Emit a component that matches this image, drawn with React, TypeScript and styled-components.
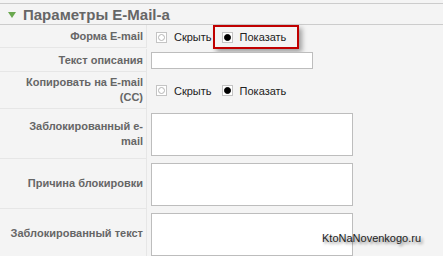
import React from "react";
import styled, { createGlobalStyle } from "styled-components";

const GlobalStyle = createGlobalStyle`
  html, body {
    margin: 0;
    padding: 0;
    background: #f4f4f4;
  }
  body {
    font-family: "Liberation Sans", Arial, sans-serif;
    width: 443px;
    height: 256px;
    overflow: hidden;
  }
`;

const Panel = styled.div`
  position: relative;
  padding-top: 3px;
  height: 253px;
  overflow: hidden;
  background: #f4f4f4;
`;

const Header = styled.div`
  display: flex;
  align-items: center;
  gap: 7px;
  height: 20px;
  padding-left: 8px;
  border-top: 1px solid #cccccc;
  border-bottom: 1px solid #cccccc;
  font-size: 15px;
  font-weight: bold;
  color: #666666;
`;

const Arrow = styled.span`
  width: 0;
  height: 0;
  border-left: 4px solid transparent;
  border-right: 4px solid transparent;
  border-top: 6px solid #6aa84f;
  margin-top: 2px;
`;

const Grid = styled.div`
  display: grid;
  grid-template-columns: 147px 1fr;
`;

const Label = styled.div<{ $h: number }>`
  display: flex;
  align-items: center;
  justify-content: flex-end;
  text-align: right;
  height: ${(p) => p.$h - 1}px;
  padding: 0 3px 0 6px;
  border-bottom: 1px solid #e6e6e6;
  border-right: 1px solid #e6e6e6;
  font-size: 11px;
  font-weight: bold;
  line-height: 15px;
  color: #666666;
  box-sizing: content-box;
  width: 137px;
`;

const Value = styled.div<{ $top?: boolean }>`
  display: flex;
  align-items: ${(p) => (p.$top ? "flex-start" : "center")};
  padding-left: 4px;
  padding-top: ${(p) => (p.$top ? "4px" : "0")};
`;

const RadioGroup = styled.div`
  display: flex;
  align-items: center;
  padding-left: 5px;
  font-size: 11px;
  color: #222222;
`;

const Option = styled.label<{ $highlight?: boolean }>`
  display: flex;
  align-items: center;
  gap: 7px;
  height: 20px;
  padding: 0 11px 0 7px;
  border: 2px solid ${(p) => (p.$highlight ? "#c00000" : "transparent")};
  box-shadow: ${(p) =>
    p.$highlight ? "3px 3px 5px rgba(0, 0, 0, 0.35)" : "none"};
  &:first-child {
    padding-left: 0;
    padding-right: 0;
    border-left: none;
    border-right: none;
    margin-right: 1px;
  }
`;

const RadioBox = styled.span`
  display: inline-flex;
  align-items: center;
  justify-content: center;
  width: 9px;
  height: 9px;
  border: 1px solid #c4c4c4;
  background: #ffffff;
`;

const Dot = styled.span<{ $on?: boolean }>`
  width: 5px;
  height: 5px;
  border-radius: 50%;
  border: 1px solid ${(p) => (p.$on ? "#000" : "#b5b5b5")};
  background: ${(p) => (p.$on ? "#000" : "#fff")};
`;

const TextInput = styled.div`
  width: 160px;
  height: 15px;
  border: 1px solid #bdbdbd;
  background: #ffffff;
`;

const TextArea = styled.div`
  width: 200px;
  height: 41px;
  border: 1px solid #bdbdbd;
  background: #ffffff;
`;

const Watermark = styled.div`
  position: absolute;
  left: 322px;
  top: 232px;
  font-size: 11px;
  color: #222222;
  text-shadow: 2px 2px 3px rgba(0, 0, 0, 0.45);
`;

const Radio = ({ on, text, highlight }: { on?: boolean; text: string; highlight?: boolean }) => (
  <Option $highlight={highlight}>
    <RadioBox>
      <Dot $on={on} />
    </RadioBox>
    {text}
  </Option>
);

const App = () => {
  return (
    <>
      <GlobalStyle />
      <Panel>
        <Header>
          <Arrow />
          Параметры E-Mail-a
        </Header>
        <Grid>
          <Label $h={23}>Форма E-mail</Label>
          <Value>
            <RadioGroup>
              <Radio text="Скрыть" />
              <Radio text="Показать" on highlight />
            </RadioGroup>
          </Value>

          <Label $h={23}>Текст описания</Label>
          <Value>
            <TextInput />
          </Value>

          <Label $h={37}>Копировать на E-mail (CC)</Label>
          <Value>
            <RadioGroup>
              <Radio text="Скрыть" />
              <Radio text="Показать" on />
            </RadioGroup>
          </Value>

          <Label $h={50}>
            Заблокированный e-
            <br />
            mail
          </Label>
          <Value $top>
            <TextArea />
          </Value>

          <Label $h={50}>Причина блокировки</Label>
          <Value $top>
            <TextArea />
          </Value>

          <Label $h={50}>Заблокированный текст</Label>
          <Value $top>
            <TextArea />
          </Value>
        </Grid>
        <Watermark>KtoNaNovenkogo.ru</Watermark>
      </Panel>
    </>
  );
};

export default App;
